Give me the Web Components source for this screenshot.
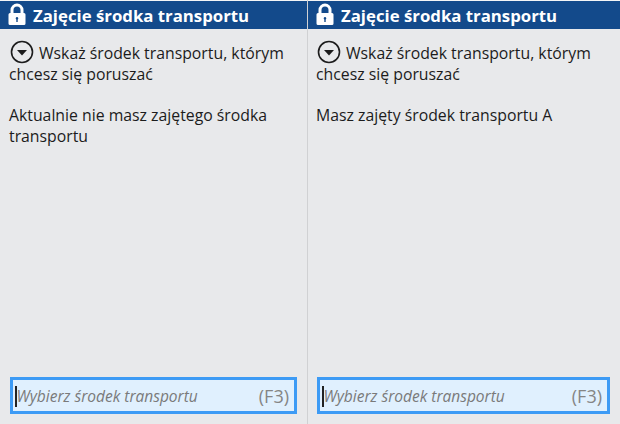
<!DOCTYPE html>
<html lang="pl">
<head>
<meta charset="utf-8">
<title>Zajęcie środka transportu</title>
<style>
  html, body { margin: 0; height: 100%; background: #e8e9eb; overflow: hidden; }
  body { font-family: "Open Sans", "Noto Sans", sans-serif; }
  #app { display: grid; grid-template-columns: 307px 1fr; height: 424px; }
</style>
</head>
<body>
<div id="app">
  <transport-panel>
    <p>Aktualnie nie masz zajętego środka transportu</p>
  </transport-panel>
  <transport-panel class="right">
    <p>Masz zajęty środek transportu A</p>
  </transport-panel>
</div>
<script>
class PanelHeader extends HTMLElement {
  constructor() {
    super();
    this.attachShadow({ mode: "open" });
    this.shadowRoot.innerHTML = `
      <style>
        :host { display: block; padding-top: 1px; background: #f4f5f6; }
        .bar {
          display: flex;
          align-items: center;
          gap: 7px;
          height: 28px;
          padding-left: 8px;
          background: #134a8b;
          color: #fff;
          font-size: 16.8px;
          font-weight: 700;
          white-space: nowrap;
        }
        svg { display: block; flex: none; margin-top: -2px; }
      </style>
      <div class="bar">
        <svg width="18" height="23" viewBox="0 0 18 23">
          <path fill="none" stroke="#fff" stroke-width="3" d="M4 11V7a5 5 0 0 1 10 0v4"/>
          <path fill="#fff" fill-rule="evenodd" d="M2 10h14a1.500 1.500 0 0 1 1.500 1.500v9A1.500 1.500 0 0 1 16 22H2A1.500 1.500 0 0 1 .5 20.500v-9A1.500 1.500 0 0 1 2 10zM9 14a1.300 1.300 0 0 0-.7 2.400V19h1.400v-2.600A1.300 1.300 0 0 0 9 14z"/>
        </svg>
        <span><slot></slot></span>
      </div>`;
  }
}
customElements.define("panel-header", PanelHeader);

class TransportInput extends HTMLElement {
  constructor() {
    super();
    this.attachShadow({ mode: "open" });
    this.shadowRoot.innerHTML = `
      <style>
        :host { display: block; }
        .box {
          display: flex;
          align-items: center;
          justify-content: space-between;
          box-sizing: border-box;
          height: 37px;
          padding: 0 5px 0 2px;
          border: 3px solid #3d9bf5;
          background: #e0f0fe;
          font-size: 15.5px;
          color: #7a7a7a;
        }
        .hint { display: flex; align-items: center; font-style: italic; white-space: nowrap; padding-top: 1px; }
        .caret { width: 1.500px; height: 21px; background: #222; }
        .key { font-size: 18px; color: #858585; padding-top: 1px; }
      </style>
      <div class="box">
        <span class="hint"><span class="caret"></span><slot></slot></span>
        <span class="key">(F3)</span>
      </div>`;
  }
}
customElements.define("transport-input", TransportInput);

class TransportPanel extends HTMLElement {
  constructor() {
    super();
    this.attachShadow({ mode: "open" });
    this.shadowRoot.innerHTML = `
      <style>
        :host {
          display: flex;
          flex-direction: column;
          height: 424px;
          box-sizing: border-box;
          color: #1c1c1c;
          font-size: 15.8px;
          line-height: 21px;
        }
        :host(.right) { border-left: 1px solid #d0d1d3; }
        .body { flex: 1; padding: 11px 8px 0 9px; }
        :host(.right) .body { padding: 11px 10px 0 8px; }
        .intro { margin: 0 0 20px; }
        .intro svg { vertical-align: -5px; margin-right: 5px; margin-left: 1px; }
        ::slotted(p) { margin: 0; }
        .foot { padding: 0 10px 10px; }
        :host(.right) .foot { padding-left: 9px; }
      </style>
      <panel-header>Zajęcie środka transportu</panel-header>
      <div class="body">
        <p class="intro">
          <svg width="24" height="24" viewBox="0 0 24 24">
            <circle cx="12" cy="12" r="10.500" fill="none" stroke="#1c1c1c" stroke-width="1.600"/>
            <path fill="#1c1c1c" d="M7 10h10l-5 5.500z"/>
          </svg>Wskaż środek transportu, którym chcesz się poruszać
        </p>
        <slot></slot>
      </div>
      <div class="foot"><transport-input>Wybierz środek transportu</transport-input></div>`;
  }
}
customElements.define("transport-panel", TransportPanel);
</script>
</body>
</html>
